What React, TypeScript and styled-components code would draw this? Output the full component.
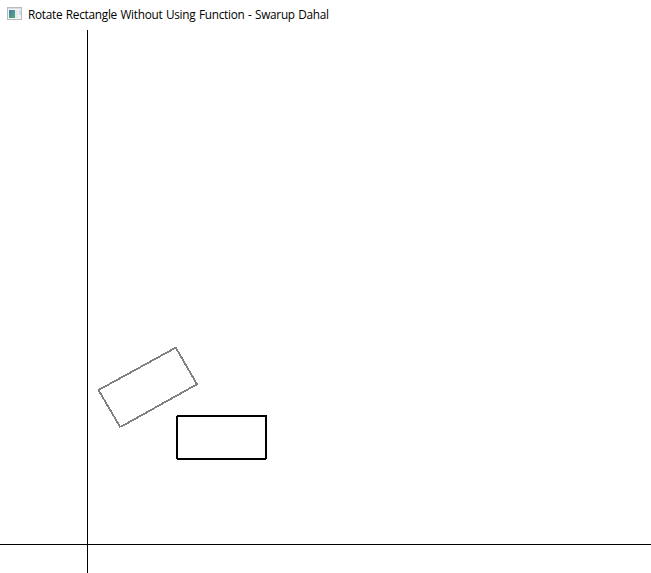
import React from "react";
import styled, { createGlobalStyle } from "styled-components";

const GlobalStyle = createGlobalStyle`
  html, body { margin: 0; padding: 0; background: #fff; overflow: hidden; }
`;

const Window = styled.main`
  display: flex;
  flex-direction: column;
  width: 651px;
  height: 573px;
  background: #fff;
`;

const TitleBar = styled.header`
  display: flex;
  align-items: center;
  gap: 6px;
  height: 30px;
  padding-left: 7px;
  box-sizing: border-box;
`;

const AppIcon = styled.svg`
  display: block;
  flex: none;
  margin-top: -3px;
`;

const Title = styled.h1`
  margin: 0;
  padding-bottom: 2px;
  font: 400 11.8px/28px "Open Sans", "Noto Sans", sans-serif;
  letter-spacing: -0.27px;
  word-spacing: 0.7px;
  white-space: nowrap;
  color: #000;
`;

const Canvas = styled.svg`
  display: block;
  flex: none;
`;

export default function App() {
  return (
    <Window>
      <GlobalStyle />
      <TitleBar>
        <AppIcon width="15" height="13" viewBox="0 0 15 13" shapeRendering="crispEdges">
          <defs>
            <linearGradient id="pane" x1="0" y1="0" x2="1" y2="1">
              <stop offset="0" stopColor="#4a78b4" />
              <stop offset="1" stopColor="#4fb070" />
            </linearGradient>
          </defs>
          <rect width="15" height="13" fill="#b9bbbd" />
          <rect x="1" y="1" width="13" height="11" fill="#f4f5f6" />
          <rect x="1" y="1" width="13" height="1" fill="#d9dde1" />
          <rect x="2" y="3" width="6" height="8" fill="url(#pane)" />
          <rect x="8" y="3" width="3" height="8" fill="#e7ebed" />
          <rect x="12" y="3" width="2" height="5" fill="#d5dce3" />
        </AppIcon>
        <Title>Rotate Rectangle Without Using Function - Swarup Dahal</Title>
      </TitleBar>
      <Canvas width="651" height="543" viewBox="0 30 651 543" shapeRendering="crispEdges">
        <rect x="87" y="30" width="1" height="543" />
        <rect x="0" y="544" width="651" height="1" />
        <g stroke="#808080" strokeWidth="1.8" fill="none">
          <path d="M97.7 390.5L175.5 347.8" />
          <path d="M175.4 347L197 384.3" />
          <path d="M197.5 384L120.5 427" />
          <path d="M120.5 427.5L98.4 390" />
        </g>
        <g fill="#000">
          <rect x="177" y="415" width="90" height="2" />
          <rect x="265" y="416" width="2" height="43" />
          <rect x="177" y="458" width="89" height="2" />
          <rect x="176" y="416" width="2" height="43" />
        </g>
      </Canvas>
    </Window>
  );
}
